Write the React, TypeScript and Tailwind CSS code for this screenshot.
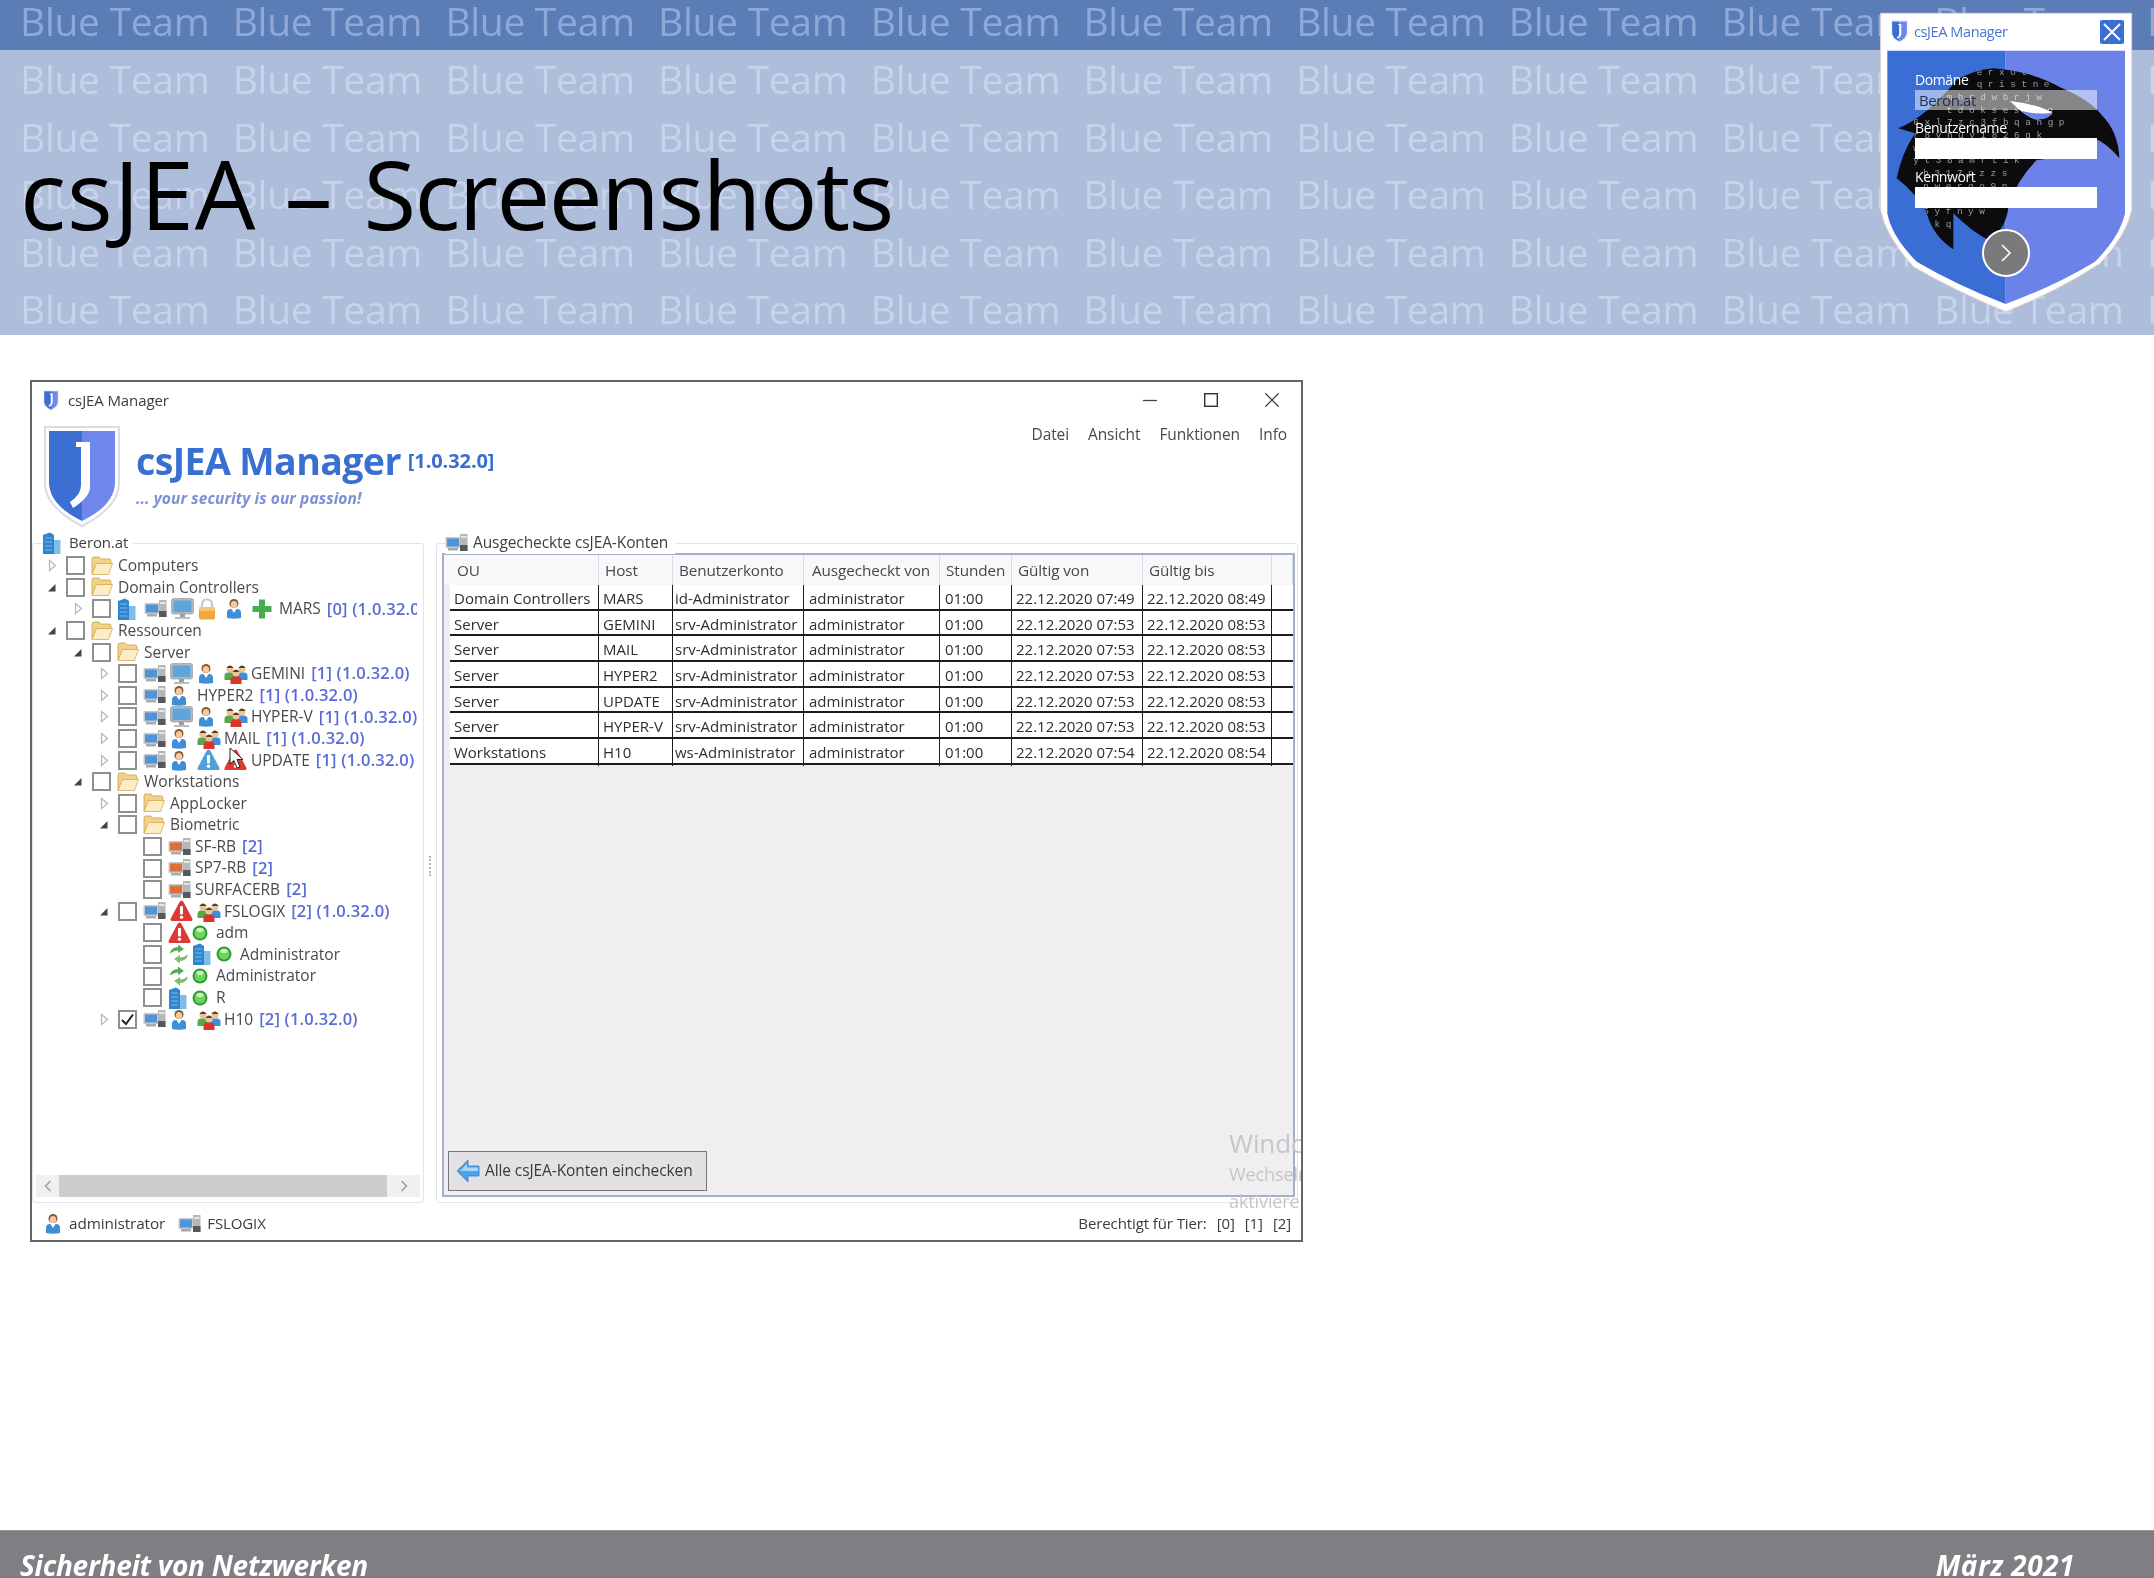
import React from "react";

const FONT = "font-['Open_Sans','Noto_Sans',sans-serif]";

const Computer = ({ screen = "#4f94d4" }: { screen?: string }) => (
  <svg width="23" height="20" viewBox="0 0 23 20">
    <rect x="0.5" y="4" width="15" height="11" rx="1" fill="#c4c8cc" />
    <rect x="2" y="5.5" width="12" height="8" fill={screen} />
    <rect x="3" y="15" width="10" height="2.5" fill="#a8acb0" />
    <rect x="15" y="1" width="7.5" height="17" fill="#b5b7b9" />
    <rect x="16" y="3" width="5.5" height="2" fill="#e6e6e6" />
    <rect x="15" y="12" width="7.5" height="6" fill="#55595c" />
  </svg>
);
const Monitor = () => (
  <svg width="23" height="22" viewBox="0 0 23 22">
    <rect x="0.5" y="0.5" width="22" height="15.5" rx="2" fill="#b4b8bc" stroke="#8d9196" strokeWidth="0.6" />
    <rect x="2.5" y="2.5" width="18" height="11.5" fill="#5ea5dc" />
    <rect x="9" y="16" width="5" height="3" fill="#9a9ea2" />
    <rect x="4" y="19" width="15" height="2" fill="#b9bcc0" />
  </svg>
);
const User = () => (
  <svg width="18" height="21" viewBox="0 0 18 21">
    <circle cx="9" cy="5.5" r="4.5" fill="#8a5a2b" />
    <ellipse cx="9" cy="6.5" rx="3.2" ry="3.6" fill="#f2c9a5" />
    <path d="M2 20V15Q2 11 6 11H12Q16 11 16 15V20Q9 21.5 2 20Z" fill="#3f8fd8" />
    <path d="M6.5 11L9 15L11.500 11Z" fill="#fff" />
  </svg>
);
const Person = ({ x, y, c }: { x: number; y: number; c: string }) => (
  <g>
    <circle cx={x} cy={y} r="3.6" fill="#f0c39b" />
    <path d={`M${x - 3.6} ${y - 1}Q${x} ${y - 6} ${x + 3.6} ${y - 1}Z`} fill="#5a3b1e" />
    <path d={`M${x - 5.500} ${y + 11}V${y + 7}Q${x - 5.500} ${y + 3.5} ${x - 2} ${y + 3.5}H${x + 2}Q${x + 5.500} ${y + 3.5} ${x + 5.500} ${y + 7}V${y + 11}Z`} fill={c} />
  </g>
);
const Group = () => (
  <svg width="24" height="21" viewBox="0 0 24 21">
    <Person x={6} y={6} c="#56a84a" />
    <Person x={18} y={6} c="#3f8fd8" />
    <Person x={12} y={10} c="#d9352c" />
  </svg>
);
const Lock = () => (
  <svg width="18" height="22" viewBox="0 0 18 22">
    <path d="M4 10V6.500Q4 1.500 9 1.500T14 6.500V10" fill="none" stroke="#c9c9c9" strokeWidth="2.200" />
    <rect x="1" y="9" width="16" height="12.500" rx="2" fill="#f2a63f" />
    <rect x="1" y="9" width="16" height="4" rx="2" fill="#f8c774" />
  </svg>
);
const Plus = () => (
  <svg width="20" height="20" viewBox="0 0 20 20">
    <path d="M7 0.500H13V7H19.500V13H13V19.500H7V13H0.500V7H7Z" fill="#47ae4c" />
  </svg>
);
const Building = ({ w = 19 }: { w?: number }) => (
  <svg width={w} height="22" viewBox="0 0 19 22">
    <path d="M1 22V3L8 0.500L12 3V22Z" fill="#2f86cf" />
    <rect x="12" y="8" width="6.500" height="14" fill="#7ebde8" />
    <path d="M3 6H10M3 10H10M3 14H10M3 18H10" stroke="#8cc6ee" strokeWidth="0.800" />
  </svg>
);
const Folder = () => (
  <svg width="22" height="20" viewBox="0 0 22 20">
    <path d="M1 18V3Q1 1 3 1H8L10 3H18Q20 3 20 5V8H6L1 18Z" fill="#f0d28a" stroke="#cf9f45" strokeWidth="0.800" />
    <path d="M1 18.500L5.500 7.500H21.500L17.500 18.500Z" fill="#fcedc6" stroke="#d8a956" strokeWidth="0.800" />
  </svg>
);
const Warn = ({ c = "#dc3a32" }: { c?: string }) => (
  <svg width="23" height="22" viewBox="0 0 23 22">
    <path d="M11.500 0.500Q12.800 0.500 13.500 2L22.500 19Q23 21 21 21H2Q0 21 0.500 19L9.500 2Q10.200 0.500 11.500 0.500Z" fill={c} />
    <rect x="10" y="6" width="3" height="8.500" rx="1" fill="#fff" />
    <circle cx="11.500" cy="17.200" r="1.700" fill="#fff" />
  </svg>
);
const Dot = () => (
  <svg width="16" height="16" viewBox="0 0 16 16">
    <circle cx="8" cy="8" r="7.500" fill="#2f9a36" />
    <circle cx="8" cy="8" r="5.500" fill="#6fd35e" />
    <ellipse cx="8" cy="5" rx="3.500" ry="2.200" fill="#c9f2bd" />
  </svg>
);
const Recycle = () => (
  <svg width="22" height="20" viewBox="0 0 20 20">
    <path d="M1 9.500Q2 3 9 3V0.500L15 5L9 9V6.500Q5 6.500 1 9.500Z" fill="#5aa957" />
    <path d="M19 10.500Q18 17 11 17V19.500L5 15L11 11V13.500Q15 13.500 19 10.500Z" fill="#7dbf6f" />
  </svg>
);
const ArrowLeft = () => (
  <svg width="24" height="24" viewBox="0 0 24 24">
    <path d="M1 12L12 1V7H23V17H12V23Z" fill="#4ba3ea" stroke="#2f7fc8" strokeWidth="0.800" />
    <path d="M4 12L11 5V8.500H22V12Z" fill="#a6d6f8" />
  </svg>
);
const Cursor = () => (
  <svg width="16" height="23" viewBox="0 0 16 23">
    <path d="M1 1V17L5 13.500L8 21L11 20L8 12.500H14Z" fill="#fff" stroke="#222" strokeWidth="1" />
  </svg>
);

const ShieldSmall = ({ w, h }: { w: number; h: number }) => (
  <svg width={w} height={h} viewBox="0 0 76 102">
    <path d="M1 2H75V58Q75 82 38 101Q1 82 1 58Z" fill="#fff" stroke="#d9dce6" strokeWidth="2" />
    <path d="M5 6H38V96Q5 80 5 57Z" fill="#3c6fd2" />
    <path d="M38 6H71V57Q71 80 38 96Z" fill="#6f86ea" />
    <path d="M32 17H46V62Q46 72 29 83L26 77Q37 70 37 60V22H32Z" fill="#fff" />
  </svg>
);

const OPEN = "open";
const CLOSED = "closed";
type Exp = "open" | "closed" | null;

const Expander = ({ kind }: { kind: Exp }) => (
  <span className="w-[20px] shrink-0 flex justify-center items-center">
    {kind === OPEN && (
      <svg width="11" height="11" viewBox="0 0 11 11" className="-translate-x-[1px]">
        <path d="M9.500 2V9.500H2Z" fill="#444" />
      </svg>
    )}
    {kind === CLOSED && (
      <svg width="9" height="13" viewBox="0 0 9 13">
        <path d="M1.500 1.500L7.500 6.500L1.500 11.500Z" fill="#fff" stroke="#b5b5b5" strokeWidth="1.200" />
      </svg>
    )}
  </span>
);

const Check = ({ on }: { on?: boolean }) => (
  <span className="ml-[4px] w-[19px] h-[19px] shrink-0 border-2 border-[#8f8f8f] bg-white flex items-center justify-center">
    {on && (
      <svg width="15" height="15" viewBox="0 0 15 15">
        <path d="M2 8L6 12L13 2.500" fill="none" stroke="#222" strokeWidth="2" />
      </svg>
    )}
  </span>
);

const Slot = ({ children, wide = true }: { children: React.ReactNode; wide?: boolean }) => (
  <span className={wide ? "w-[27px] shrink-0 flex items-center" : "w-[24px] shrink-0 flex items-center"}>{children}</span>
);

const PADS = ["pl-[8px]", "pl-[34px]", "pl-[60px]", "pl-[85px]"];

type RowProps = {
  level: number;
  exp?: Exp;
  on?: boolean;
  icons: React.ReactNode[];
  narrow?: boolean;
  text: string;
  blue?: string;
};
const Row = ({ level, exp = null, on, icons, narrow, text, blue }: RowProps) => (
  <div className={`h-[21.6px] flex items-center whitespace-nowrap ${PADS[level]}`}>
    <Expander kind={exp} />
    <Check on={on} />
    <span className="w-[6px] shrink-0" />
    {icons.map((ic, i) => (
      <Slot key={i} wide={!narrow}>
        {ic}
      </Slot>
    ))}
    <span className="text-[#4a4a4c] text-[15.500px] tracking-[0px]">{text}</span>
    {blue && <span className="ml-[6px] text-[#5a6bd8] font-semibold text-[16.500px] tracking-[0.2px]">{blue}</span>}
  </div>
);

const C = <Computer />;
const O = <Computer screen="#d9703c" />;
const M = <Monitor />;
const U = <User />;
const G = <Group />;
const F = <Folder />;
const V = "[1] (1.0.32.0)";
const V2 = "[2] (1.0.32.0)";

const COLS = "grid grid-cols-[149px_74px_131px_136px_72px_131px_129px_1fr]";
const HEAD = ["OU", "Host", "Benutzerkonto", "Ausgecheckt von", "Stunden", "Gültig von", "Gültig bis", ""];
const DATA = [
  ["Domain Controllers", "MARS", "id-Administrator", "22.12.2020 07:49", "22.12.2020 08:49"],
  ["Server", "GEMINI", "srv-Administrator", "22.12.2020 07:53", "22.12.2020 08:53"],
  ["Server", "MAIL", "srv-Administrator", "22.12.2020 07:53", "22.12.2020 08:53"],
  ["Server", "HYPER2", "srv-Administrator", "22.12.2020 07:53", "22.12.2020 08:53"],
  ["Server", "UPDATE", "srv-Administrator", "22.12.2020 07:53", "22.12.2020 08:53"],
  ["Server", "HYPER-V", "srv-Administrator", "22.12.2020 07:53", "22.12.2020 08:53"],
  ["Workstations", "H10", "ws-Administrator", "22.12.2020 07:54", "22.12.2020 08:54"],
];

const Watermark = ({ light }: { light?: boolean }) => (
  <div className={`flex pl-[20px] h-[57.6px] leading-[57.6px] text-[39px] tracking-[-0.3px] overflow-hidden ${light ? "text-[#c7d3e9]" : "text-[#8ea8d8]"}`}>
    {Array.from({ length: 11 }).map((_, i) => (
      <span key={i} className="w-[212.7px] shrink-0 whitespace-nowrap">
        Blue Team
      </span>
    ))}
  </div>
);

const EAGLE =
  "M400 205Q520 215 600 262Q690 300 725 345Q775 395 778 475Q750 440 715 420Q650 430 620 460Q560 480 530 480Q470 540 445 620Q440 680 390 722Q340 700 280 640L280 748Q220 710 200 640Q170 580 110 535Q125 460 165 400L115 385Q200 350 290 240Q340 210 400 205Z";
const LETTERS = [
  "e r x o t a",
  "q r i s t n e",
  "m h p d w b r j w",
  "t d o k s e s j y g",
  "6 x l 7 z c 3 f b q a h g p",
  "r 8 v h u y i 8 2 6 g k",
  "w r a b e t a o u m f d",
  "y t 3 8 a m r t i k",
  "b 3 1 7 p z z s",
  "n w e r q o 9 p",
  "m p l s v 2",
  "5 y f n y w",
  "u k q",
];

const Login = () => (
  <div className="absolute left-[1860px] top-0 w-[294px] h-[330px]">
    <svg width="294" height="330" viewBox="0 0 882 990" className="absolute inset-0">
      <defs>
        <clipPath id="eg">
          <path d={EAGLE} />
        </clipPath>
      </defs>
      <path d="M62 40H815V630Q800 705 720 790Q600 870 437 935Q280 870 160 800Q75 705 62 630Z" fill="#fff" stroke="#e8d4cc" strokeWidth="3" />
      <path d="M82 152H437V912Q290 855 170 785Q95 710 82 640Z" fill="#3a6ed4" />
      <path d="M437 152H795V640Q780 710 705 785Q590 855 437 912Z" fill="#6b83e8" />
      <path d={EAGLE} fill="#0c0c0e" />
      <g clipPath="url(#eg)" fill="#9b9ba0" fontSize="28" fontFamily="'Liberation Mono', monospace">
        {LETTERS.map((l, i) => (
          <text key={i} x={i < 2 ? 350 : i < 4 ? 260 : i < 8 ? 160 : 190} y={224 + i * 38}>
            {l}
          </text>
        ))}
      </g>
      <path d="M450 303Q520 310 575 335Q570 358 525 358Q490 345 450 303Z" fill="#fff" />
      <path d="M485 333Q530 345 575 338Q570 358 525 358Q500 350 485 333Z" fill="#6b83e8" />
    </svg>
    <div className="absolute left-[31px] top-[20px]">
      <ShieldSmall w={17} h={23} />
    </div>
    <div className="absolute left-[54px] top-[21px] text-[14.500px] leading-[22px] text-[#4a74d2] tracking-[-0.4px]">csJEA Manager</div>
    <div className="absolute left-[240px] top-[20px] w-[24px] h-[24px] rounded-[2px] bg-[#3a6ed4] flex items-center justify-center">
      <svg width="20" height="20" viewBox="0 0 20 20">
        <path d="M2 2L18 18M18 2L2 18" stroke="#fff" strokeWidth="1.800" />
      </svg>
    </div>
    <div className="absolute left-[55px] top-[70px] w-[182px] text-white text-[14px] tracking-[-0.4px]">
      <div className="h-[20px] leading-[20px]">Domäne</div>
      <div className="h-[20px] bg-[#ffffff80] text-[#1f2c55] text-[15px] leading-[20px] pl-[4px]">Beron.at</div>
      <div className="h-[28px] leading-[36px]">Benutzername</div>
      <div className="h-[21px] bg-white" />
      <div className="h-[28px] leading-[36px]">Kennwort</div>
      <div className="h-[21px] bg-white" />
    </div>
    <div className="absolute left-[122px] top-[229px] w-[48px] h-[48px] rounded-full bg-[#7a7a7c] border-2 border-white flex items-center justify-center">
      <svg width="14" height="22" viewBox="0 0 14 22">
        <path d="M3 3L11 11L3 19" fill="none" stroke="#fff" strokeWidth="1.600" />
      </svg>
    </div>
  </div>
);

export default function App() {
  return (
    <div className={`relative w-[2154px] h-[1578px] overflow-hidden bg-white flex flex-col blur-[0.4px] ${FONT}`}>
      <header className="relative h-[335px] shrink-0 bg-[#aebdda] overflow-hidden">
        <div className="h-[50px] bg-[#5b7db6] overflow-hidden">
          <div className="-mt-[8px]">
            <Watermark />
          </div>
        </div>
        <Watermark light />
        <Watermark light />
        <Watermark light />
        <Watermark light />
        <Watermark light />
        <h1 className="absolute left-[20px] top-[128px] text-[96px] leading-[130px] text-black whitespace-nowrap">
          <span className="tracking-[1px]">csJEA</span>
          <span className="tracking-[3px]"> – </span>
          <span className="tracking-[-1.600px]">Screenshots</span>
        </h1>
        <Login />
      </header>

      <div className="relative ml-[30px] mt-[45px] w-[1273px] h-[862px] border-2 border-[#666668] bg-white overflow-hidden text-[15px] text-[#444446] tracking-[-0.1px]">
        <div className="h-[36px] flex items-center pl-[11px] relative">
          <ShieldSmall w={16} h={21} />
          <span className="ml-[9px] text-[#3c3c3e]">csJEA Manager</span>
          <div className="ml-auto flex items-center pr-[22px] gap-[47px]">
            <svg width="14" height="14" viewBox="0 0 14 14">
              <path d="M0 7.500H14" stroke="#444" strokeWidth="1.300" />
            </svg>
            <svg width="14" height="14" viewBox="0 0 14 14">
              <rect x="0.700" y="0.700" width="12.600" height="12.600" fill="none" stroke="#333" strokeWidth="1.400" />
            </svg>
            <svg width="14" height="14" viewBox="0 0 14 14">
              <path d="M0.500 0.500L13.500 13.500M13.500 0.500L0.500 13.500" stroke="#333" strokeWidth="1.200" />
            </svg>
          </div>
        </div>

        <div className="h-[113px] flex items-start">
          <div className="ml-[12px] mt-[7px] shrink-0">
            <ShieldSmall w={76} h={102} />
          </div>
          <div className="ml-[16px]">
            <div className="flex items-center mt-[17px] h-[52px]">
              <span className="text-[37.500px] leading-[52px] font-bold text-[#3a6fd2] tracking-[-0.6px]">csJEA Manager</span>
              <span className="ml-[7px] text-[20px] font-bold text-[#3a6fd2] tracking-[-0.1px]">[1.0.32.0]</span>
            </div>
            <div className="text-[15.500px] font-bold italic text-[#7d90d4] tracking-[0.1px]">... your security is our passion!</div>
          </div>
          <div className="ml-auto mt-[5px] pr-[14px] flex gap-[19px] text-[15.500px] text-[#4a4a4c]">
            <span>Datei</span>
            <span>Ansicht</span>
            <span>Funktionen</span>
            <span>Info</span>
          </div>
        </div>

        <div className="flex h-[672px] pt-[12px] pr-[3px]">
          <section className="relative w-[392px] shrink-0 border border-[#e4e4ea] rounded-[3px] flex flex-col">
            <div className="absolute -top-[13px] left-[9px] bg-white flex items-center pr-[5px] h-[23px]">
              <Building />
              <span className="ml-[8px] text-[#3f3f41]">Beron.at</span>
            </div>
            <div className="flex-1 pt-[11px] pl-[1px] mr-[6px] overflow-hidden">
              <Row level={0} exp="closed" icons={[F]} text="Computers" />
              <Row level={0} exp="open" icons={[F]} text="Domain Controllers" />
              <Row level={1} exp="closed" icons={[<Building />, C, M, <Lock />, U, <Plus />]} text="MARS" blue="[0] (1.0.32.0)" />
              <Row level={0} exp="open" icons={[F]} text="Ressourcen" />
              <Row level={1} exp="open" icons={[F]} text="Server" />
              <Row level={2} exp="closed" icons={[C, M, U, G]} text="GEMINI" blue={V} />
              <Row level={2} exp="closed" icons={[C, U]} text="HYPER2" blue={V} />
              <Row level={2} exp="closed" icons={[C, M, U, G]} text="HYPER-V" blue={V} />
              <Row level={2} exp="closed" icons={[C, U, G]} text="MAIL" blue={V} />
              <Row level={2} exp="closed" icons={[C, U, <Warn c="#4f9fd8" />, <Warn />]} text="UPDATE" blue={V} />
              <Row level={1} exp="open" icons={[F]} text="Workstations" />
              <Row level={2} exp="closed" icons={[F]} text="AppLocker" />
              <Row level={2} exp="open" icons={[F]} text="Biometric" />
              <Row level={3} icons={[O]} text="SF-RB" blue="[2]" />
              <Row level={3} icons={[O]} text="SP7-RB" blue="[2]" />
              <Row level={3} icons={[O]} text="SURFACERB" blue="[2]" />
              <Row level={2} exp="open" icons={[C, <Warn />, G]} text="FSLOGIX" blue={V2} />
              <Row level={3} narrow icons={[<Warn />, <Dot />]} text="adm" />
              <Row level={3} narrow icons={[<Recycle />, <Building />, <Dot />]} text="Administrator" />
              <Row level={3} narrow icons={[<Recycle />, <Dot />]} text="Administrator" />
              <Row level={3} narrow icons={[<Building />, <Dot />]} text="R" />
              <Row level={2} exp="closed" on icons={[C, U, G]} text="H10" blue={V2} />
            </div>
            <div className="h-[22px] mx-[3px] mb-[5px] bg-[#f0f0f1] flex items-center">
              <span className="w-[23px] flex justify-center">
                <svg width="8" height="12" viewBox="0 0 8 12">
                  <path d="M6.500 1L1.500 6L6.500 11" fill="none" stroke="#9a9a9c" strokeWidth="1.400" />
                </svg>
              </span>
              <span className="w-[328px] h-full bg-[#cdcbcd]" />
              <span className="flex-1 flex justify-center">
                <svg width="8" height="12" viewBox="0 0 8 12">
                  <path d="M1.500 1L6.500 6L1.500 11" fill="none" stroke="#9a9a9c" strokeWidth="1.400" />
                </svg>
              </span>
            </div>
          </section>

          <div className="w-[12px] shrink-0 flex items-center justify-center pb-[15px]">
            <span className="w-[2px] h-[20px] border-l-2 border-dotted border-[#b5b5b8]" />
          </div>

          <section className="relative flex-1 border border-[#e4e4ea] rounded-[3px] pt-[9px] pl-[5px] pr-[2px] pb-[5px]">
            <div className="absolute -top-[13px] left-[8px] bg-white flex items-center pr-[7px] h-[23px]">
              <Computer />
              <span className="ml-[5px] text-[15.500px] text-[#3f3f41]">Ausgecheckte csJEA-Konten</span>
            </div>
            <div className="h-full border-2 border-[#a3b1c7] bg-[#efeef0] flex flex-col pl-[6px]">
              <div className={`${COLS} h-[30px] bg-[#f8f8fa] items-stretch -ml-[6px] pl-[6px] text-[15.300px] whitespace-nowrap`}>
                {HEAD.map((h, i) => (
                  <div key={i} className={`flex items-center border-r border-[#dcdce4] text-[#48484a] ${i === 0 ? "pl-[7px]" : i === 3 ? "pl-[8px]" : "pl-[6px]"}`}>
                    {h}
                  </div>
                ))}
              </div>
              {DATA.map((d, i) => (
                <div key={i} className={`${COLS} h-[25.7px] bg-white border-b-2 border-[#1c1c1c] text-[15px] text-[#2e2e30] tracking-[0px] whitespace-nowrap`}>
                  <div className="border-r border-[#1c1c1c] pl-[4px] leading-[27px] overflow-hidden">{d[0]}</div>
                  <div className="border-r border-[#1c1c1c] pl-[4px] leading-[27px]">{d[1]}</div>
                  <div className="border-r border-[#1c1c1c] pl-[2px] leading-[27px]">{d[2]}</div>
                  <div className="border-r border-[#1c1c1c] pl-[5px] leading-[27px]">administrator</div>
                  <div className="border-r border-[#1c1c1c] pl-[5px] leading-[27px]">01:00</div>
                  <div className="border-r border-[#1c1c1c] pl-[4px] leading-[27px]">{d[3]}</div>
                  <div className="border-r border-[#1c1c1c] pl-[4px] leading-[27px]">{d[4]}</div>
                  <div />
                </div>
              ))}
              <button className="mt-auto mb-[4px] -ml-[2px] w-[259px] h-[40px] shrink-0 border border-[#77777a] bg-[#e2e1e3] flex items-center pl-[7px] text-[15.500px] text-[#3a3a3c]">
                <ArrowLeft />
                <span className="ml-[5px] whitespace-nowrap">Alle csJEA-Konten einchecken</span>
              </button>
            </div>
          </section>
        </div>

        <div className="h-[41px] flex items-center justify-between pl-[12px] pr-[10px] text-[#3c3c3e]">
          <div className="flex items-center">
            <User />
            <span className="ml-[7px] text-[15.300px]">administrator</span>
            <span className="ml-[13px]">
              <Computer />
            </span>
            <span className="ml-[6px]">FSLOGIX</span>
          </div>
          <div className="flex items-center">
            <span>Berechtigt für Tier:</span>
            <span className="ml-[10px]">[0]</span>
            <span className="ml-[10px]">[1]</span>
            <span className="ml-[10px]">[2]</span>
          </div>
        </div>

        <div className="absolute left-[197px] top-[365px]">
          <Cursor />
        </div>
        <div className="absolute left-[1197px] top-[743px] text-[#c6c6c8] whitespace-nowrap">
          <div className="text-[26px] leading-[36px]">Windows</div>
          <div className="text-[18px] leading-[27px]">Wechseln</div>
          <div className="text-[18px] leading-[27px]">aktivieren</div>
        </div>
      </div>

      <footer className="mt-auto h-[48px] shrink-0 bg-[#807e82] border-t border-[#98969a] flex justify-between pl-[20px] pr-[79px] text-white text-[28px] font-bold italic leading-[68px] whitespace-nowrap overflow-hidden">
        <span className="tracking-[-0.250px]">Sicherheit von Netzwerken</span>
        <span className="tracking-[0.500px]">März 2021</span>
      </footer>
    </div>
  );
}
